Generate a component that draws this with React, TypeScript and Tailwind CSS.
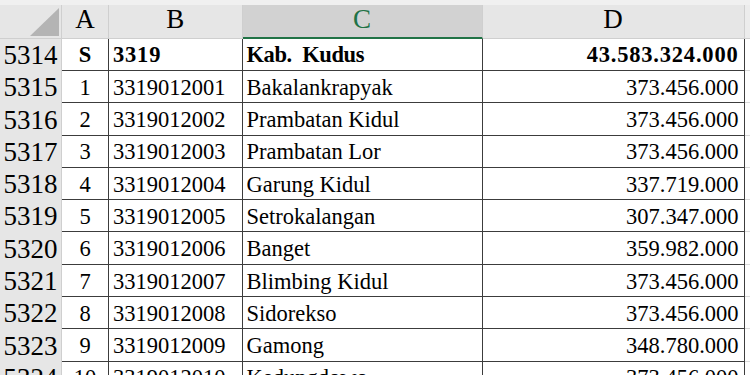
const rows = [
  { n: 5315, a: "1", b: "3319012001", c: "Bakalankrapyak", d: "373.456.000" },
  { n: 5316, a: "2", b: "3319012002", c: "Prambatan Kidul", d: "373.456.000" },
  { n: 5317, a: "3", b: "3319012003", c: "Prambatan Lor", d: "373.456.000" },
  { n: 5318, a: "4", b: "3319012004", c: "Garung Kidul", d: "337.719.000" },
  { n: 5319, a: "5", b: "3319012005", c: "Setrokalangan", d: "307.347.000" },
  { n: 5320, a: "6", b: "3319012006", c: "Banget", d: "359.982.000" },
  { n: 5321, a: "7", b: "3319012007", c: "Blimbing Kidul", d: "373.456.000" },
  { n: 5322, a: "8", b: "3319012008", c: "Sidorekso", d: "373.456.000" },
  { n: 5323, a: "9", b: "3319012009", c: "Gamong", d: "348.780.000" },
  { n: 5324, a: "10", b: "3319012010", c: "Kedungdowo", d: "373.456.000" },
];

const grid = "grid grid-cols-[62px_47px_133.5px_240px_262px_1fr]";
const cell = "flex items-end h-[32.3px] pb-[3px] border-b border-[#3c3c3c] text-[22.5px] leading-none text-black";

function Row({ n, a, b, c, d, bold }: { n: number; a: string; b: string; c: string; d: string; bold?: boolean }) {
  // the bold total row uses wider digits in the original sheet
  const w = bold ? "font-bold" : "";
  const num = bold ? "tracking-[0.8px]" : "";
  const txt = bold ? "tracking-[-0.4px]" : "";
  return (
    <div className={grid}>
      <div className="flex items-end justify-center h-[32.3px] pb-[2px] bg-[#e6e6e6] border-r border-[#cfcfcf] text-[27px] leading-none text-black">
        {n}
      </div>
      <div className={`${cell} ${w} justify-center border-r`}>{a}</div>
      <div className={`${cell} ${w} ${num} pl-[4px] border-r`}>{b}</div>
      <div className={`${cell} ${w} ${txt} pl-[4px] border-r whitespace-pre`}>{c}</div>
      <div className={`${cell} ${w} ${num} justify-end pr-[5px] border-r`}>{d}</div>
      <div className="h-[32.3px] border-b border-[#d9d9d9] bg-white" />
    </div>
  );
}

export default function App() {
  return (
    <div className="w-[750px] h-[375px] overflow-hidden bg-white font-[family-name:Liberation_Serif,serif]">
      <div className="h-[5px] bg-[#f0f0f0]" />
      <div className={`${grid} h-[33.7px] bg-[#e6e6e6] text-[27px] leading-none`}>
        <div className="relative border-r border-b border-[#cfcfcf]">
          <svg className="absolute left-[30px] top-[3px]" width="29" height="28" viewBox="0 0 29 28">
            <polygon points="29,0 29,28 0,28" fill="#b4b4b4" />
          </svg>
        </div>
        <div className="flex items-end justify-center pb-[5px] border-r border-b border-[#cfcfcf]">A</div>
        <div className="flex items-end justify-center pb-[5px] border-r border-b border-[#cfcfcf]">B</div>
        <div className="flex items-end justify-center pb-[4px] bg-[#d2d2d2] border-r border-[#cfcfcf] border-b-2 border-b-[#217346] text-[#217346]">
          C
        </div>
        <div className="flex items-end justify-center pb-[5px] border-r border-b border-[#cfcfcf]">D</div>
        <div className="border-b border-[#cfcfcf] bg-[#ececec]" />
      </div>
      <Row n={5314} a="S" b="3319" c="Kab.  Kudus" d="43.583.324.000" bold />
      {rows.map((r) => (
        <Row key={r.n} {...r} />
      ))}
    </div>
  );
}
